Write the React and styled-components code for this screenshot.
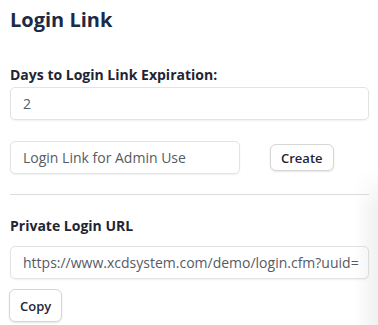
import React from 'react';
import styled, { createGlobalStyle } from 'styled-components';

const GlobalStyle = createGlobalStyle`
  body {
    margin: 0;
    background: #fff;
    font-family: "Open Sans", "Liberation Sans", sans-serif;
    overflow: hidden;
  }
`;

const Page = styled.div`
  position: relative;
  width: 378px;
  height: 325px;
  padding: 0 9px 0 10px;
  box-sizing: border-box;
`;

const Title = styled.h2`
  margin: 0;
  padding-top: 6px;
  font-size: 20px;
  line-height: 28px;
  font-weight: 700;
  color: #1b2a47;
`;

const Label = styled.div`
  margin-top: ${props => props.top || 0}px;
  font-size: 14px;
  line-height: 19px;
  font-weight: 700;
  color: #1f2533;
`;

const Input = styled.div`
  box-sizing: border-box;
  width: ${props => props.width || '100%'};
  height: 33px;
  margin-top: ${props => props.top || 0}px;
  padding: 0 12px;
  display: flex;
  align-items: center;
  border: 1px solid #e3e3e3;
  border-radius: 5px;
  box-shadow: 0 1px 2px rgba(0, 0, 0, 0.06);
  font-size: 14px;
  color: #555b66;
  white-space: nowrap;
  overflow: hidden;
`;

const Row = styled.div`
  display: flex;
  align-items: center;
  gap: 30px;
  margin-top: 21px;
`;

const Button = styled.button`
  box-sizing: border-box;
  display: block;
  height: ${props => props.height || 27}px;
  padding: 0 ${props => props.pad || 10}px;
  margin-top: ${props => props.top || 0}px;
  margin-left: ${props => props.shift || 0}px;
  background: #fff;
  border: 1px solid #d6d6d6;
  border-radius: 6px;
  box-shadow: 0 1px 2px rgba(0, 0, 0, 0.1);
  font-family: inherit;
  font-size: 13px;
  font-weight: 600;
  color: #1f2533;
`;

const Divider = styled.hr`
  margin: 20px 0 0;
  border: none;
  border-top: 1px solid #dcdcdc;
`;

const EdgeShade = styled.div`
  position: absolute;
  top: 170px;
  right: 0;
  width: 24px;
  height: 155px;
  background: linear-gradient(to right, rgba(0, 0, 0, 0), rgba(0, 0, 0, 0.06));
  -webkit-mask-image: linear-gradient(to bottom, transparent, #000 40px);
  mask-image: linear-gradient(to bottom, transparent, #000 40px);
  pointer-events: none;
`;

export default function App() {
  return (
    <Page>
      <GlobalStyle />
      <Title>Login Link</Title>
      <Label top={31}>Days to Login Link Expiration:</Label>
      <Input top={3}>2</Input>
      <Row>
        <Input width="230px">Login Link for Admin Use</Input>
        <Button>Create</Button>
      </Row>
      <Divider />
      <Label top={21}>Private Login URL</Label>
      <Input top={11}>https://www.xcdsystem.com/demo/login.cfm?uuid=</Input>
      <Button top={10} height={33} shift={-1}>Copy</Button>
      <EdgeShade />
    </Page>
  );
}
